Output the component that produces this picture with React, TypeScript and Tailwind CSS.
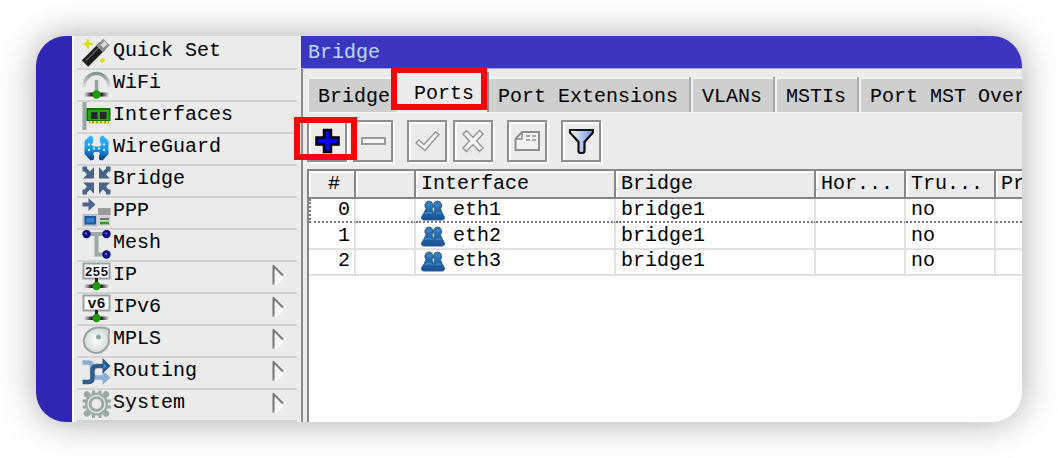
import React from "react";

type IconProps = { children: React.ReactNode };

function Icon({ children }: IconProps) {
  return (
    <svg viewBox="0 0 29 29" className="size-[29px] shrink-0" aria-hidden="true">
      {children}
    </svg>
  );
}

function LinkNode() {
  return (
    <g>
      <path d="M14.5 16v6" stroke="#222" strokeWidth="3" />
      <rect x="2" y="22.5" width="25" height="3.5" fill="url(#wire)" />
      <circle cx="14.5" cy="24" r="4.2" fill="#1d9a0a" />
    </g>
  );
}

const icons = {
  wand: (
    <Icon>
      <path d="M3 25.500L21 7.500" stroke="#1c1c1c" strokeWidth="9" />
      <path d="M4 22.500L18 8.500" stroke="#5a5a5a" strokeWidth="1.6" />
      <path d="M17.500 11L24.500 4" stroke="#8e8e8e" strokeWidth="9" />
      <path d="M20 8.500L24 4.500" stroke="#d8d8d8" strokeWidth="4" />
      <path d="M6 .5l1.600 3.600L11.500 6 7.600 7.800 6 11.500 4.300 7.800.5 6l3.800-1.900z" fill="#dde010" />
      <circle cx="20.500" cy="22.300" r="2.400" fill="#dde02a" />
    </Icon>
  ),
  wifi: (
    <Icon>
      <path d="M2 17A12.500 13.500 0 1 1 27 17" fill="none" stroke="url(#fade)" strokeWidth="3.500" />
      <path d="M14.500 10v12" stroke="#93a59f" strokeWidth="3.500" />
      <rect x="2" y="22.500" width="25" height="4" fill="url(#wire)" />
      <circle cx="14.500" cy="24.500" r="4.200" fill="#1d9a0a" />
    </Icon>
  ),
  card: (
    <Icon>
      <rect x="0.500" y="0" width="4" height="28" fill="#98a7a2" />
      <path d="M7 17h20v4.500H7z" fill="#a8a818" />
      <path d="M9 18v4M13 18v4M17 18v4M21 18v4M25 18v4" stroke="#e9e94a" strokeWidth="2" />
      <rect x="4.500" y="6" width="24" height="13" fill="#127004" />
      <rect x="6" y="8" width="21" height="10" fill="#2aa30c" />
      <path d="M9 10h6.500v7H9zM18 10h6.500v7H18z" fill="#26252b" />
    </Icon>
  ),
  guard: (
    <Icon>
      <path
        d="M8 1.500l3 1.500v5l-1.500 3 2 1.500h6l2-1.500L18 8V3l3-1.500 5.500 5.500v13l-6 6.500-3.500-1v-4l1-2-1.500-1.500h-4L11 19.500l1 2v4l-3.500 1-6-6.500V7z"
        fill="url(#guard)"
      />
      <path d="M6 10.500h2M21 10.500h2M6 16h2M11 14.500h2M16 14.500h2M21 16h2" stroke="#dff2ff" strokeWidth="2" />
    </Icon>
  ),
  bridge: (
    <Icon>
      <g fill="#456487">
        {[
          "translate(0 0)",
          "translate(29 0) scale(-1 1)",
          "translate(0 29) scale(1 -1)",
          "translate(29 29) scale(-1 -1)",
        ].map((t) => (
          <path key={t} transform={t} d="M.5.500H5v2L8 5.500 12 1v11.500H1L5 8.500 2.500 5.500h-2z" />
        ))}
      </g>
    </Icon>
  ),
  ppp: (
    <Icon>
      <path d="M.5 4.500h6V0l7 6.500-7 6.500V8.500h-6z" fill="#4a658a" />
      <rect x="16" y="10" width="12.500" height="18" fill="#d2d2d2" />
      <path d="M16 10h12.500v7H16z" fill="#9b9b9b" />
      <path d="M18 21h9" stroke="#727272" strokeWidth="2" />
      <path d="M18 25h9" stroke="#25a50d" strokeWidth="2.500" />
      <path d="M.5 16h15v12.500H.5z" fill="#b8bfc7" />
      <path d="M2.500 18h11.500v8.500H2.500z" fill="#1c57a0" />
      <path d="M4.500 20h7.500v4.500H4.500z" fill="#3d83d0" />
    </Icon>
  ),
  mesh: (
    <Icon>
      <path d="M4.500 4h20M14.500 4v20.500h10" fill="none" stroke="#9aaaa5" strokeWidth="4" />
      <g fill="#0b0b86">
        <circle cx="4.500" cy="4" r="4.200" />
        <circle cx="24.500" cy="4" r="4.200" />
        <circle cx="24.500" cy="24.500" r="4.200" />
      </g>
      <g fill="#5b5bc4">
        <circle cx="4" cy="3.500" r="1.300" />
        <circle cx="24" cy="3.500" r="1.300" />
        <circle cx="24" cy="24" r="1.300" />
      </g>
    </Icon>
  ),
  ip: (
    <Icon>
      <rect x="1.500" y="1.500" width="26" height="15" fill="#fff" stroke="#93a59f" strokeWidth="2" />
      <text x="14.500" y="13.500" textAnchor="middle" fontSize="13" fontWeight="700" fontFamily="Liberation Mono, monospace" fill="#111">
        255
      </text>
      <LinkNode />
    </Icon>
  ),
  ipv6: (
    <Icon>
      <rect x="1.500" y="1.500" width="26" height="15" fill="#fff" stroke="#93a59f" strokeWidth="2" />
      <text x="14.500" y="13.500" textAnchor="middle" fontSize="15" fontWeight="700" fontFamily="Liberation Mono, monospace" fill="#111">
        v6
      </text>
      <LinkNode />
    </Icon>
  ),
  tag: (
    <Icon>
      <path
        d="M11 2.500Q18 .5 25 2.500 27.500 3 27 6.500q-1 4 0 8 0 4-3.500 8-4 4.500-9 4.500-5.500 0-10-4.500Q1 18.500 2 13 3.500 5.500 11 2.500z"
        fill="url(#tag)"
        stroke="#96a5a0"
        strokeWidth="2"
      />
      <circle cx="16.500" cy="11" r="2.500" fill="#93a59f" />
    </Icon>
  ),
  routing: (
    <Icon>
      <path d="M.5 4.500h6q3.500 0 3.500 4v7q0 4 4 4h7" fill="none" stroke="#8caed4" strokeWidth="4.500" />
      <path d="M20.500 13l8 6.500-8 7.500z" fill="#8caed4" />
      <path d="M.5 24h6q4 0 4-4v-7.500q0-4.500 4.500-4.500h6" fill="none" stroke="#335b8c" strokeWidth="4.500" />
      <path d="M20.500 0l8 8-8 7.500z" fill="#265684" />
      <path d="M21.500 5l3 3-3 3z" fill="#2699e2" />
    </Icon>
  ),
  gear: (
    <Icon>
      <g fill="#9aa9a4">
        <circle cx="14.500" cy="14" r="11.500" />
        {[45, 135, 225, 315].map((a) => (
          <circle key={a} cx="14.500" cy="0.500" r="3.200" transform={`rotate(${a} 14.500 14)`} />
        ))}
        <path d="M10 .5h3v4h-3zM16.500.500h3v4h-3zM10 24h3v4h-3zM16.500 24h3v4h-3zM.5 9.500h4v3h-4zM.5 15.500h4v3h-4zM25 9.500h4v3h-4zM25 15.500h4v3h-4z" />
      </g>
      <circle cx="14.500" cy="14" r="8.500" fill="none" stroke="#dfe4e2" strokeWidth="1.500" />
      <circle cx="14.500" cy="14" r="5" fill="#ebebeb" />
    </Icon>
  ),
};

const menu: { label: string; icon: keyof typeof icons; sub?: boolean }[] = [
  { label: "Quick Set", icon: "wand" },
  { label: "WiFi", icon: "wifi" },
  { label: "Interfaces", icon: "card" },
  { label: "WireGuard", icon: "guard" },
  { label: "Bridge", icon: "bridge" },
  { label: "PPP", icon: "ppp" },
  { label: "Mesh", icon: "mesh" },
  { label: "IP", icon: "ip", sub: true },
  { label: "IPv6", icon: "ipv6", sub: true },
  { label: "MPLS", icon: "tag", sub: true },
  { label: "Routing", icon: "routing", sub: true },
  { label: "System", icon: "gear", sub: true },
];

const tabs = ["Bridge", "Ports", "Port Extensions", "VLANs", "MSTIs", "Port MST Over"];

const rows = [
  { id: 0, name: "eth1" },
  { id: 1, name: "eth2" },
  { id: 2, name: "eth3" },
];

function Gradients() {
  return (
    <svg className="absolute size-0" aria-hidden="true">
      <defs>
        <linearGradient id="wire">
          <stop offset="0" stopColor="#222" stopOpacity="0" />
          <stop offset="0.300" stopColor="#222" />
          <stop offset="0.700" stopColor="#222" />
          <stop offset="1" stopColor="#222" stopOpacity="0" />
        </linearGradient>
        <linearGradient id="fade" x1="0" y1="0" x2="0" y2="1">
          <stop offset="0" stopColor="#82968f" />
          <stop offset="1" stopColor="#dde1e0" />
        </linearGradient>
        <linearGradient id="guard" x1="0" y1="0" x2="0" y2="1">
          <stop offset="0" stopColor="#35b4ff" />
          <stop offset="0.500" stopColor="#189af2" />
          <stop offset="1" stopColor="#0a3a80" />
        </linearGradient>
        <radialGradient id="tag">
          <stop offset="0" stopColor="#fff" />
          <stop offset="1" stopColor="#d5dad8" />
        </radialGradient>
        <linearGradient id="people" x1="0" y1="0" x2="0" y2="1">
          <stop offset="0" stopColor="#3b7fb8" />
          <stop offset="1" stopColor="#174f94" />
        </linearGradient>
        <linearGradient id="funnel">
          <stop offset="0" stopColor="#fff" />
          <stop offset="1" stopColor="#6d8ee0" />
        </linearGradient>
      </defs>
    </svg>
  );
}

function People() {
  return (
    <svg viewBox="0 0 24 21" className="h-[21px] w-6 shrink-0" aria-hidden="true">
      <g fill="url(#people)" stroke="#2c5f8c" strokeWidth="1">
        <path d="M13.500 8.500Q12 6.500 12.500 4.500 13.500 1 16.500 1t4 3.500q.5 2-1 4.500 1.500 4 3.500 7 1.500 4-2 4h-9z" />
        <path d="M5 8.500Q3.500 6.500 4 4.500 5 1 8 1t4 3.500q.5 2-1 4.500 1.500 4 3 7 1 4-2 4H3q-3.500 0-2-4 2.500-3 4-7.500z" />
      </g>
      <path d="M6 5.500q2-1.500 4 0M14.500 5.500q2-1.500 4 0M4 13.500q4-2 7.500 0M15 13.500q3-1 5 0" stroke="#2f8bdc" strokeWidth="1.500" fill="none" />
    </svg>
  );
}

function ToolButton({ label, className = "", mark, children }: { label: string; className?: string; mark?: boolean; children: React.ReactNode }) {
  return (
    <button
      type="button"
      aria-label={label}
      className={`relative flex h-[42px] w-10 shrink-0 items-center justify-center border-2 border-[#8f8f8f] bg-[#ebebeb] shadow-[inset_2px_2px_0_#fff,2px_2px_0_#fafafa] ${className}`}
    >
      <svg viewBox="0 0 26 26" className="size-[26px]" aria-hidden="true">
        {children}
      </svg>
      {mark && <span className="absolute -top-[5px] -left-[15px] h-[43px] w-[63px] border-6 border-[#fb0007]" />}
    </button>
  );
}

export default function App() {
  return (
    <div className="bg-white p-9 font-['Liberation_Mono',monospace] text-xl/6 text-black">
      <Gradients />
      <div className="flex overflow-hidden rounded-[30px] bg-[#ebebeb] shadow-[0_0_36px_rgba(0,0,0,0.34)]">
        <div className="w-9 shrink-0 bg-[#3026b6]" />
        <nav className="w-[229px] shrink-0 border-l-2 border-[#fafafa] pt-0.5 pr-1 pl-[3px]">
          <ul>
            {menu.map((item) => (
              <li key={item.label} className="border-b-2 border-[#d2d2d2]">
                <button type="button" className="flex h-[30px] w-full items-start pr-3 pl-[5px] text-left leading-[26px]">
                  {icons[item.icon]}
                  <span className="pl-0.5">{item.label}</span>
                  {item.sub && (
                    <svg viewBox="0 0 13 20" className="mt-[3px] ml-auto h-5 w-[13px]" aria-hidden="true">
                      <path d="M2.500 1.500L12 10.500 2.500 19z" fill="#f4f4f4" />
                      <path d="M12 11L3 19.500" stroke="#fff" strokeWidth="2" />
                      <path d="M1.500 19.500V1l9.500 9.500" fill="none" stroke="#777" strokeWidth="2" />
                    </svg>
                  )}
                </button>
              </li>
            ))}
          </ul>
        </nav>

        <main className="relative flex min-w-0 flex-1 flex-col">
          <h1 className="h-[33px] border-b border-[#a7a3e2] bg-[#3c35bf] px-[7px] pt-[5px] text-[#b9dcff]">Bridge</h1>
          <div className="flex flex-1 flex-col border-l-2 border-[#8c8c8c] pl-1">
            <div role="tablist" className="flex h-11 items-end border-b border-[#fafafa] whitespace-nowrap">
              {tabs.map((tab) =>
                tab === "Ports" ? (
                  <button
                    key={tab}
                    type="button"
                    role="tab"
                    aria-selected="true"
                    className="relative z-10 -mr-0.5 -ml-1.5 h-10 shrink-0 border-r-2 border-[#8c8c8c] bg-[#ebebeb] pt-1 pr-[13px] pl-[17px]"
                  >
                    {tab}
                    <span className="absolute -top-[5px] -left-[6px] h-[43px] w-24 border-6 border-[#fb0007]" />
                  </button>
                ) : (
                  <button
                    key={tab}
                    type="button"
                    role="tab"
                    aria-selected="false"
                    className="h-[35px] shrink-0 border-r-2 border-[#a9a9a9] bg-[#cfcfcf] pt-1 pr-[11px] pl-[11px] shadow-[inset_2px_2px_0_#f2f2f2]"
                  >
                    {tab}
                  </button>
                )
              )}
            </div>

            <div className="flex pt-[7px] pb-[7px]">
              <ToolButton label="Add" mark className="z-10">
                <path d="M10 2h7v7.500h7.500v7H17V24h-7v-7.500H2.500v-7H10z" fill="#0303f5" stroke="#000" strokeWidth="2.500" />
              </ToolButton>
              <ToolButton label="Remove" className="ml-1.5">
                <path d="M2 10h23v6H2z" fill="#f6f6f6" stroke="#999" strokeWidth="2" />
              </ToolButton>
              <ToolButton label="Enable" className="ml-3.5">
                <path d="M2 15l3-3 5 4.500L21.500 4 25 6.500 11 22.500z" fill="#f4f4f4" stroke="#999" strokeWidth="1.500" />
              </ToolButton>
              <ToolButton label="Disable" className="ml-1.5">
                <path d="M3 6l3.500-3.500 6.500 7 6.500-7L23 6l-6.500 7 6.500 7-3.500 3.500-6.500-7-6.500 7L3 20l6.500-7z" fill="#f4f4f4" stroke="#999" strokeWidth="1.500" />
              </ToolButton>
              <ToolButton label="Comment" className="ml-3.5">
                <path d="M8 4h17v18H1.500V11z" fill="#f0f0f0" stroke="#8d8d8d" strokeWidth="2" />
                <path d="M8 4v7H1.500M12 8h4M18 8h4M12 12h4M18 12h4" fill="none" stroke="#8d8d8d" strokeWidth="1.500" />
              </ToolButton>
              <ToolButton label="Filter" className="ml-3.5">
                <path d="M2 2h23v2.500L16.500 14v9q0 2-3 2t-3-2v-9L2 4.500z" fill="url(#funnel)" stroke="#111" strokeWidth="2.200" />
              </ToolButton>
            </div>

            <div className="flex-1 border-t-2 border-l-2 border-[#868686] bg-white">
              <table className="w-full table-fixed border-separate border-spacing-0">
                <colgroup>
                  <col className="w-[47px]" />
                  <col className="w-[60px]" />
                  <col className="w-[200px]" />
                  <col className="w-[200px]" />
                  <col className="w-[90px]" />
                  <col className="w-[90px]" />
                  <col />
                </colgroup>
                <thead>
                  <tr className="h-7 bg-[#ebebeb] text-left [&>th]:border-r-2 [&>th]:border-b-2 [&>th]:border-[#868686] [&>th]:py-0 [&>th]:pr-0 [&>th]:pl-[5px] [&>th]:font-normal [&>th]:whitespace-nowrap [&>th]:shadow-[inset_2px_2px_0_#fff] [&>th:last-child]:border-r-0">
                    <th className="text-center">#</th>
                    <th></th>
                    <th>Interface</th>
                    <th>Bridge</th>
                    <th>Hor...</th>
                    <th>Tru...</th>
                    <th>Pr</th>
                  </tr>
                </thead>
                <tbody>
                  {rows.map((row, i) => (
                    <tr
                      key={row.id}
                      className={`[&>td]:border-r-2 [&>td]:border-b-2 [&>td]:border-r-[#e1e1e1] [&>td]:pr-0 [&>td]:pb-0 [&>td]:pl-[5px] [&>td]:align-top [&>td]:leading-[22px] [&>td:last-child]:border-r-0 ${
                        i === 0
                          ? "h-6 [&>td]:border-b-[#777] [&>td]:pt-0 [&>td]:[border-bottom-style:dotted] [&>td:first-child]:border-l-2 [&>td:first-child]:border-l-[#777] [&>td:first-child]:[border-left-style:dotted]"
                          : i === 1
                            ? "h-[27px] [&>td]:border-b-[#e1e1e1] [&>td]:pt-0.5"
                            : "h-[26px] [&>td]:border-b-[#e1e1e1] [&>td]:pt-0"
                      }`}
                    >
                      <td className="text-right">
                        <span className="pr-1">{row.id}</span>
                      </td>
                      <td></td>
                      <td>
                        <span className="flex items-center gap-2">
                          <People />
                          {row.name}
                        </span>
                      </td>
                      <td>bridge1</td>
                      <td></td>
                      <td>no</td>
                      <td></td>
                    </tr>
                  ))}
                </tbody>
              </table>
            </div>
          </div>
        </main>
      </div>
    </div>
  );
}
